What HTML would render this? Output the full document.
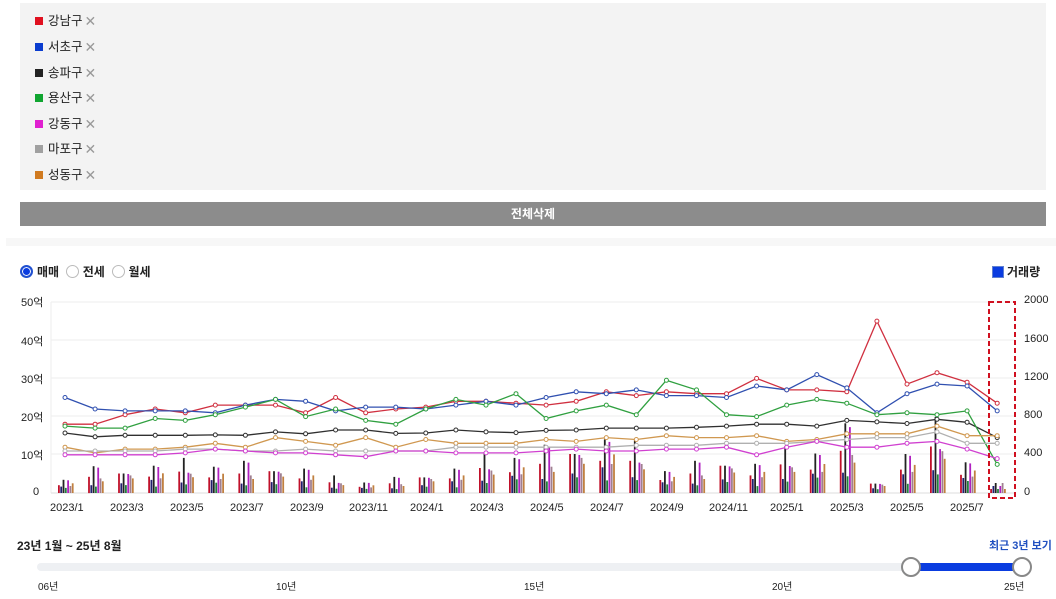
<!DOCTYPE html>
<html><head><meta charset="utf-8">
<style>
*{margin:0;padding:0;box-sizing:border-box}
body{width:1056px;height:599px;background:#fff;font-family:"Liberation Sans","Noto Sans CJK KR",sans-serif;position:relative;overflow:hidden;color:#222}
.box{position:absolute;left:20px;top:3px;width:1026px;height:187px;background:#f3f3f3}
.lg{position:absolute;left:35px;font-size:12.5px;height:14px;line-height:14px;display:flex;align-items:center}
.lg i{display:inline-block;width:8px;height:8px;margin-right:5px}
.lg b{font-weight:normal;color:#999;margin-left:2px;font-size:14px}
.btn{position:absolute;left:20px;top:202px;width:1026px;height:24px;background:#8c8c8c;color:#fff;font-weight:bold;font-size:12px;text-align:center;line-height:24px}
.sep{position:absolute;left:6px;top:238px;width:1050px;height:8px;background:#f7f7f7}
.abs{position:absolute;font-size:11px;white-space:nowrap}
.radio{display:inline-block;width:13px;height:13px;border-radius:50%;border:1px solid #bbb;vertical-align:-2px;margin-right:4px;background:#fff}
</style></head><body>
<div class="box"></div>
<div class="lg" style="top:14px"><i style="background:#e0101f"></i>강남구<b>✕</b></div>
<div class="lg" style="top:40px"><i style="background:#0a3ccf"></i>서초구<b>✕</b></div>
<div class="lg" style="top:66px"><i style="background:#222"></i>송파구<b>✕</b></div>
<div class="lg" style="top:91px"><i style="background:#10a530"></i>용산구<b>✕</b></div>
<div class="lg" style="top:117px"><i style="background:#e020d0"></i>강동구<b>✕</b></div>
<div class="lg" style="top:142px"><i style="background:#a0a0a0"></i>마포구<b>✕</b></div>
<div class="lg" style="top:168px"><i style="background:#d07a20"></i>성동구<b>✕</b></div>
<div class="btn">전체삭제</div>
<div class="sep"></div>
<div class="abs" style="left:20px;top:263px;font-size:12px;font-weight:bold"><span class="radio" style="border:2px solid #2050d0;background:#0a3ce0;box-shadow:inset 0 0 0 1px #fff"></span>매매 &nbsp;<span class="radio"></span>전세 &nbsp;<span class="radio"></span>월세</div>
<div class="abs" style="left:992px;top:263px;font-size:12px;font-weight:bold"><span style="display:inline-block;width:12px;height:12px;background:#0a3ce0;border:1px solid #6080d0;vertical-align:-2px;margin-right:3px"></span>거래량</div>
<div class="abs" style="left:21px;top:294px">50억</div>
<div class="abs" style="left:21px;top:333px">40억</div>
<div class="abs" style="left:21px;top:371px">30억</div>
<div class="abs" style="left:21px;top:409px">20억</div>
<div class="abs" style="left:21px;top:447px">10억</div>
<div class="abs" style="left:33px;top:486px">0</div>
<div class="abs" style="left:1024px;top:294px">2000</div>
<div class="abs" style="left:1024px;top:333px">1600</div>
<div class="abs" style="left:1024px;top:371px">1200</div>
<div class="abs" style="left:1024px;top:409px">800</div>
<div class="abs" style="left:1024px;top:447px">400</div>
<div class="abs" style="left:1024px;top:486px">0</div>
<div class="abs" style="top:502px;left:0;width:1056px;height:14px;font-size:10px">
<span class="abs" style="left:50px">2023/1</span><span class="abs" style="left:110px">2023/3</span><span class="abs" style="left:170px">2023/5</span><span class="abs" style="left:230px">2023/7</span><span class="abs" style="left:290px">2023/9</span><span class="abs" style="left:349px">2023/11</span><span class="abs" style="left:410px">2024/1</span><span class="abs" style="left:470px">2024/3</span><span class="abs" style="left:530px">2024/5</span><span class="abs" style="left:590px">2024/7</span><span class="abs" style="left:650px">2024/9</span><span class="abs" style="left:709px">2024/11</span><span class="abs" style="left:770px">2025/1</span><span class="abs" style="left:830px">2025/3</span><span class="abs" style="left:890px">2025/5</span><span class="abs" style="left:950px">2025/7</span>
</div>
<svg id="ch" width="1056" height="599" style="position:absolute;left:0;top:0"></svg>
<div class="abs" style="left:17px;top:537px;font-size:12px;font-weight:bold">23년 1월 ~ 25년 8월</div>
<div class="abs" style="left:989px;top:537px;font-size:11px;font-weight:bold;color:#2050c0">최근 3년 보기</div>
<div style="position:absolute;left:37px;top:563px;width:985px;height:8px;background:#eef0f3;border-radius:4px"></div>
<div style="position:absolute;left:911px;top:563px;width:111px;height:8px;background:#0a3ce0"></div>
<div style="position:absolute;left:901px;top:557px;width:20px;height:20px;border-radius:50%;background:#fff;border:2px solid #888"></div>
<div style="position:absolute;left:1012px;top:557px;width:20px;height:20px;border-radius:50%;background:#fff;border:2px solid #888"></div>
<div class="abs" style="left:38px;top:578px;font-size:10px">06년</div>
<div class="abs" style="left:276px;top:578px;font-size:10px">10년</div>
<div class="abs" style="left:524px;top:578px;font-size:10px">15년</div>
<div class="abs" style="left:772px;top:578px;font-size:10px">20년</div>
<div class="abs" style="left:1004px;top:578px;font-size:10px">25년</div>
<script>
var s='',X=function(i){return 65+i*30.07},Y=function(v){return 493-v*3.82};
s+='<line x1="51" y1="302" x2="51" y2="493" stroke="#eee"/>';
[302,340,378,416,454].forEach(function(y){s+='<line x1="51" y1="'+y+'" x2="1015" y2="'+y+'" stroke="#eee"/>'});
s+='<line x1="51" y1="493" x2="1015" y2="493" stroke="#ddd"/>';
var base=[15,25,25,28,30,30,30,28,25,15,12,15,20,25,35,40,45,50,55,45,25,30,35,30,40,45,65,12,40,65,35,6];
var bc=['#c0102a','#202070','#222','#208040','#b020c0','#a08090','#c08040'];
var bf=[0.5,0.3,0.75,0.22,0.65,0.45,0.45];
for(var i=0;i<32;i++){var b=base[i];for(var k=0;k<7;k++){var h=b*bf[k]*(0.8+0.4*((i*7+k*3)%5)/4)*1.3;if(i==31)h=4+(k%3)*3;s+='<rect x="'+(X(i)-7+k*2.3).toFixed(1)+'" y="'+(493-h).toFixed(1)+'" width="1.8" height="'+h.toFixed(1)+'" fill="'+bc[k]+'"/>';}}
function ins(a,v){a.splice(21,0,v);return a}
var L=[
['#d03040',ins([18,18,20.5,22,21,23,23,23,21,25,21,22,22.5,24,24,23.5,23,24,26.5,25.5,26.5,26,30,27,27,26.5,45,28.5,31.5,29,23.5],26)],
['#3050b0',ins([25,22,21.5,21.5,21.5,21,23,24.5,24,21.5,22.5,22.5,22,23,24,23,25,26.5,26,27,25.5,25,28,27,31,27.5,21,26,28.5,28,21.5],25.5)],
['#303030',ins([15.7,14.7,15.1,15.1,15.1,15.2,15.1,16,15.5,16.5,16.5,15.6,15.7,16.5,16,15.8,16.4,16.5,17,17,17,17.5,18,18,17.5,19,18.6,18.2,19.3,18.5,14.5],17.2)],
['#30a040',ins([17.5,17,17,19.5,19,20.5,22.5,24.5,20,22,19,18,22,24.5,23,26,19.5,21.5,23,20.5,29.5,20.5,20,23,24.5,23.5,20.5,21,20.5,21.5,7.5],27)],
['#d09850',ins([12,10.5,11.5,11.5,12,13,12,14.5,13.5,12.5,14.5,12,14,13,13,13,14,13.5,14.5,14,15,14.5,15,13.5,14,15.5,15.5,15.5,17.5,15,15],14.5)],
['#b0b0b0',ins([11,11,11,11,11.5,11.5,11,11,11.5,11,11,11,11,12,12,12,12,12,12,12.5,12.5,13,13,13,13.5,14,14.5,14.5,16,13,13],12.5)],
['#d040d0',ins([10,10,10,10,10.5,11.5,11,10.5,10.5,10,9.5,11,11,10.5,10.5,10.5,11,11.5,11,11,11.5,12,10,12,13.5,12,12,13,13.5,11.5,9],11.5)]];
L.forEach(function(l){var p=l[1].map(function(v,i){return X(i).toFixed(1)+','+Y(v).toFixed(1)}).join(' ');s+='<polyline points="'+p+'" fill="none" stroke="'+l[0]+'" stroke-width="1.3"/>';l[1].forEach(function(v,i){s+='<circle cx="'+X(i).toFixed(1)+'" cy="'+Y(v).toFixed(1)+'" r="2" fill="#fff" stroke="'+l[0]+'"/>'})});
s+='<rect x="989" y="302" width="26" height="196" fill="none" stroke="#d01020" stroke-width="2" stroke-dasharray="5,3"/>';
document.getElementById('ch').innerHTML=s;
</script>
</body></html>
